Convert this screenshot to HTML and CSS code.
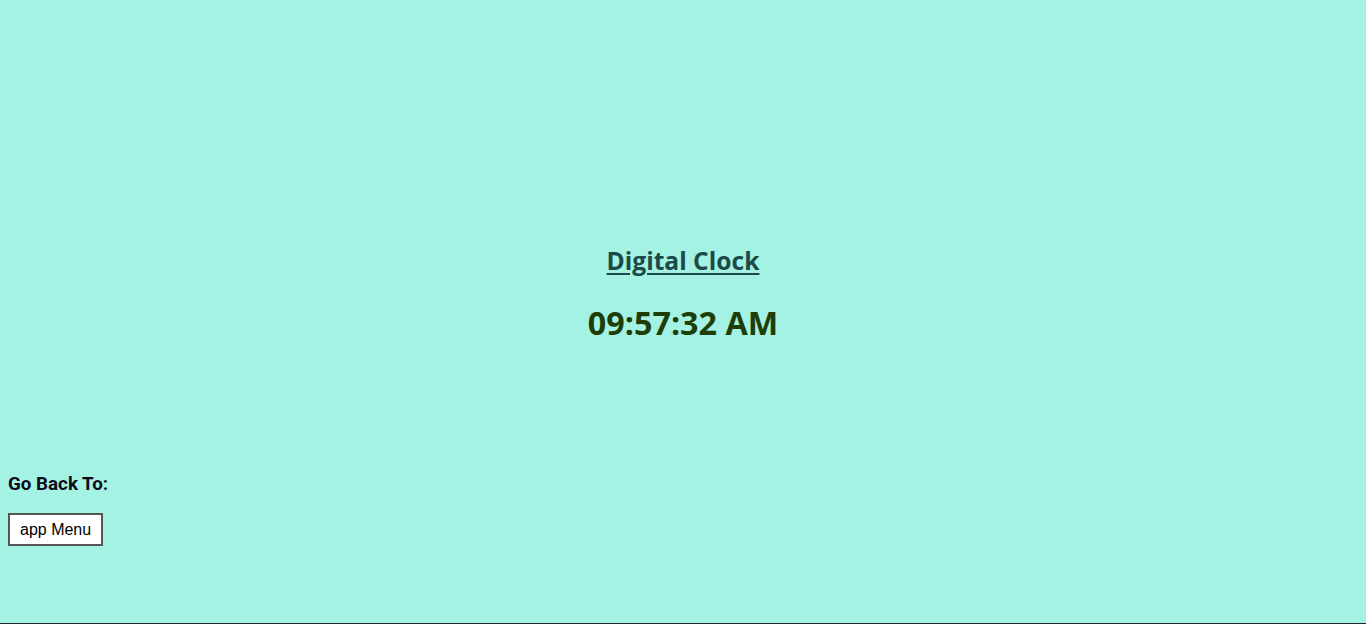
FILE: index.html
```html
<!DOCTYPE html>
<html>
<head>
<meta charset="utf-8">
<link rel="stylesheet" href="styles.css">
</head>
<body>
<main class="page">
  <section class="clock">
    <h2 class="title">Digital Clock</h2>
    <div class="time">09:57:32 AM</div>
  </section>
  <nav class="back">
    <h3 class="back-label">Go Back To:</h3>
    <button class="back-btn">app Menu</button>
  </nav>
</main>
</body>
</html>
```
FILE: styles.css
```css
html, body {
  margin: 0;
  padding: 0;
  height: 100%;
}
body {
  background: #a3f2e3;
  border-bottom: 1px solid #1d2a28;
  box-sizing: border-box;
  overflow: hidden;
}
.page {
  padding: 0 8px;
}
.clock {
  display: flex;
  flex-direction: column;
  align-items: center;
  padding-top: 246px;
}
.title {
  margin: 0;
  font-family: "Open Sans", "DejaVu Sans", sans-serif;
  font-weight: 700;
  font-size: 24.6px;
  line-height: 30px;
  color: #1c4a46;
  text-decoration: underline;
  text-underline-offset: 3px;
}
.time {
  margin-top: 24px;
  font-family: "Open Sans", "DejaVu Sans", sans-serif;
  font-weight: 700;
  font-size: 32.3px;
  line-height: 44px;
  color: #1f3d06;
}
.back {
  margin-top: 129px;
}
.back-label {
  margin: 0;
  font-family: "Roboto", "Liberation Sans", sans-serif;
  font-weight: 700;
  font-size: 18.8px;
  line-height: 22px;
  color: #0c0c18;
}
.back-btn {
  margin-top: 18px;
  font-family: "Liberation Sans", Arial, sans-serif;
  font-size: 16px;
  background: #fff;
  color: #000;
  border: 2px solid #555;
  padding: 1px 10px 0;
  height: 33px;
  white-space: nowrap;
}
```
